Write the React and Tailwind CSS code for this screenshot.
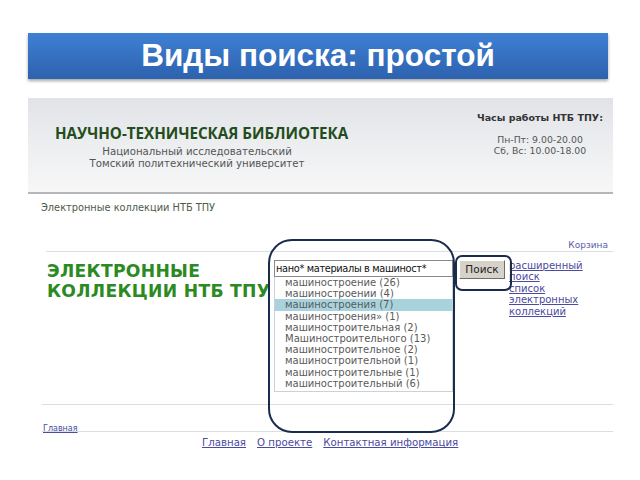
import React from 'react';

const suggestions = [
  'машиностроение (26)',
  'машиностроении (4)',
  'машиностроения (7)',
  'машиностроения» (1)',
  'машиностроительная (2)',
  'Машиностроительного (13)',
  'машиностроительное (2)',
  'машиностроительной (1)',
  'машиностроительные (1)',
  'машиностроительный (6)',
];

const verdana = "font-['DejaVu_Sans',Verdana,sans-serif]";

const App = () => (
  <div className={`relative h-[480px] w-[640px] overflow-hidden bg-white ${verdana}`}>
    {/* slide title */}
    <div className="pl-[28px] pt-[33px]">
      <div className="flex h-[46px] w-[580px] items-center justify-center bg-gradient-to-b from-[#3f80d4] to-[#2d62ae] shadow-[0_2px_3px_rgba(0,0,0,0.35)]">
        <h1 className="font-['Liberation_Sans',Arial,sans-serif] text-[31.5px] font-bold leading-none text-white">
          Виды поиска: простой
        </h1>
      </div>
    </div>

    {/* screenshot of the library page */}
    <div className="ml-[28px] mt-[19px] w-[585px]">
      <header className="flex h-[96px] justify-between border-b-2 border-[#b4b6b8] bg-gradient-to-b from-[#e1e3e7] via-[#eceef0] to-[#f7f7f7]">
        <div className="pl-[27px] pt-[25px]">
          <div className="font-['Open_Sans',sans-serif] text-[15.2px] font-bold leading-[20px] text-[#234d1c]">
            НАУЧНО-ТЕХНИЧЕСКАЯ БИБЛИОТЕКА
          </div>
          <div className="mt-[3px] w-[284px] text-center text-[10.2px] leading-[11.5px] text-[#555]">
            <div>Национальный исследовательский</div>
            <div>Томский политехнический университет</div>
          </div>
        </div>
        <div className="w-[140px] pr-[6px] pt-[14px] text-center">
          <div className="text-[9.5px] font-bold leading-[12px] text-[#333]">Часы работы НТБ ТПУ:</div>
          <div className="mt-[10px] text-[9.3px] leading-[11px] text-[#555]">
            <div>Пн-Пт: 9.00-20.00</div>
            <div>Сб, Вс: 10.00-18.00</div>
          </div>
        </div>
      </header>

      <div className="h-[56px] pl-[13px] pt-[8px]">
        <div className="text-[9.8px] leading-[12px] text-[#4d5a48]">Электронные коллекции НТБ ТПУ</div>
        <div className="ml-[5px] mt-[26px] flex justify-end border-b border-[#d6dfe2] pr-[5px]">
          <span className="text-[9px] leading-[11px] text-[#5a5aa8]">Корзина</span>
        </div>
      </div>

      <div className="flex h-[154px] pt-[10px]">
        <div className="ml-[19px] w-[227px] pt-[1px] text-[17.2px] font-bold leading-[20px] tracking-[0.3px] text-[#2b8a22]">
          <div>ЭЛЕКТРОННЫЕ</div>
          <div className="whitespace-nowrap">КОЛЛЕКЦИИ НТБ ТПУ</div>
        </div>
        <div className="w-[179px]">
          <div className="flex h-[17px] items-center border border-[#8a8a8a] bg-white pl-[1px] text-[9.8px] leading-none tracking-[-0.35px] text-[#111]">
            нано* материалы в машиност*
          </div>
          <ul className="border border-t-0 border-[#c8d2d8] pb-[2px] text-[10px] leading-[11.2px] text-[#5a5a5a]">
            {suggestions.map((s, i) => (
              <li key={s} className={`pl-[10px] ${i === 2 ? 'bg-[#a9d3dc]' : ''}`}>
                {s}
              </li>
            ))}
          </ul>
        </div>
        <div className="ml-[6px]">
          <button
            type="button"
            className="flex h-[19px] w-[46px] items-center justify-center border border-t-white border-l-white border-r-[#6d6d6d] border-b-[#6d6d6d] bg-[#d6d2ca] text-[10.5px] text-[#222]"
          >
            Поиск
          </button>
        </div>
        <div className="ml-[4px] text-[10px] leading-[11.4px] text-[#4a4aa0] underline">
          <div>расширенный</div>
          <div>поиск</div>
          <div>список</div>
          <div>электронных</div>
          <div>коллекций</div>
        </div>
      </div>

      <div className="ml-[14px] h-[27px] border-t border-[#d6dfe2] pl-[1px] pt-[9px]">
        <span className="text-[8px] leading-[10px] text-[#4a4aa0] underline">Главная</span>
      </div>
      <div className="ml-[14px] border-t border-[#d6dfe2] pl-[160px] pt-[5px]">
        <div className="flex gap-[11px] text-[10.2px] leading-[12px] text-[#4a4aa0] underline">
          <span>Главная</span>
          <span>О проекте</span>
          <span>Контактная информация</span>
        </div>
      </div>
    </div>

    {/* highlight frames drawn over the screenshot */}
    <div className="absolute left-[268px] top-[239px] h-[194px] w-[187px] rounded-[24px] border-[2.5px] border-[#1b2b4b]" />
    <div className="absolute left-[455px] top-[255px] h-[36px] w-[57px] rounded-[7px] border-[2.5px] border-[#1b2b4b]" />
  </div>
);

export default App;
